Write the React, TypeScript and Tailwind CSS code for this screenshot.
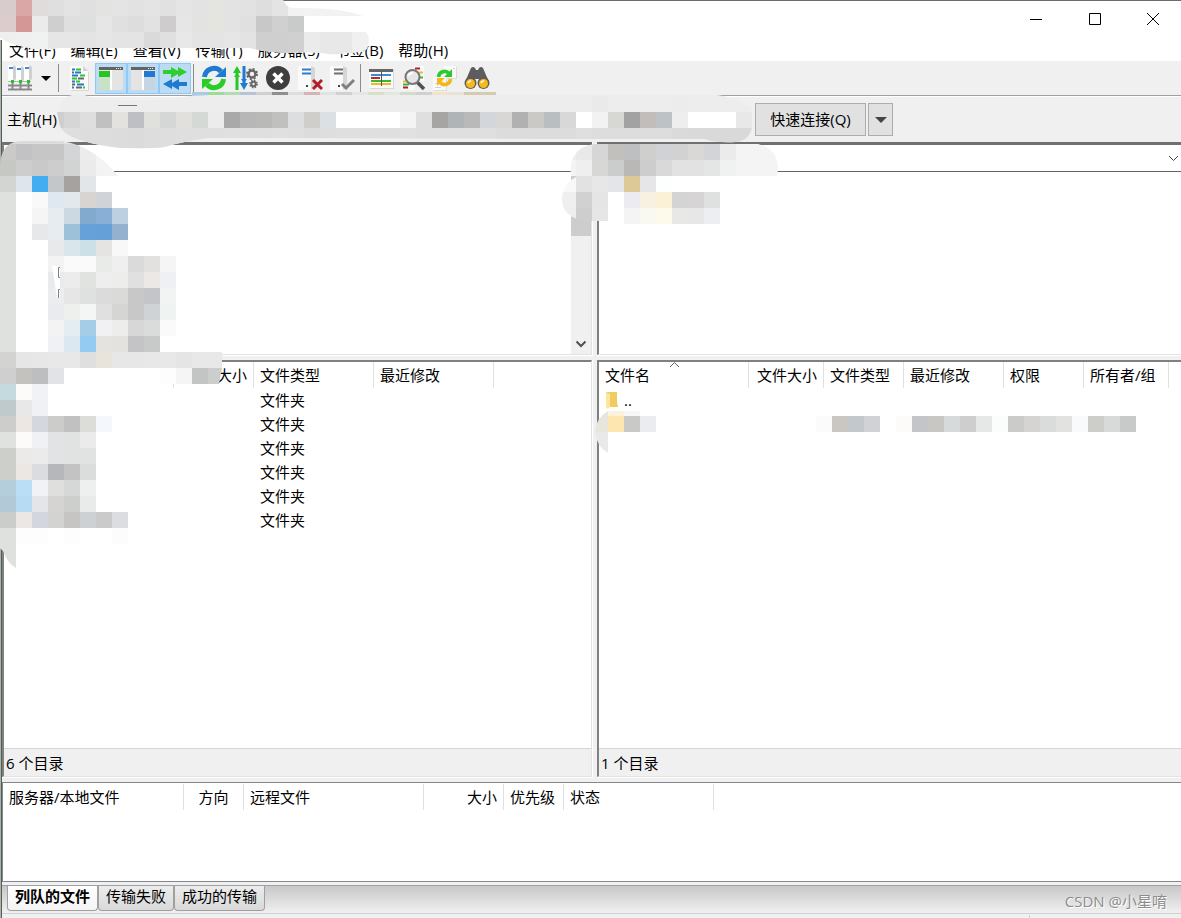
import type { ReactNode } from 'react';

interface Column {
    label: string;
    width: string;
    align?: string;
}

interface MosaicRow {
    x: number;
    y: number;
    h?: number;
    colors: string;
}

const menus = ['文件(F)', '编辑(E)', '查看(V)', '传输(T)', '服务器(S)', '书签(B)', '帮助(H)'];

const localColumns: Column[] = [
    { label: '文件名', width: 'w-[170px]' },
    { label: '文件大小', width: 'w-[80px]', align: 'text-right' },
    { label: '文件类型', width: 'w-[120px]' },
    { label: '最近修改', width: 'w-[120px]' },
];

const remoteColumns: Column[] = [
    { label: '文件名', width: 'w-[150px]' },
    { label: '文件大小', width: 'w-[75px]', align: 'text-right' },
    { label: '文件类型', width: 'w-[80px]' },
    { label: '最近修改', width: 'w-[100px]' },
    { label: '权限', width: 'w-[80px]' },
    { label: '所有者/组', width: 'w-[85px]' },
];

const queueColumns: Column[] = [
    { label: '服务器/本地文件', width: 'w-[181px]' },
    { label: '方向', width: 'w-[60px]', align: 'text-center' },
    { label: '远程文件', width: 'w-[180px]' },
    { label: '大小', width: 'w-[80px]', align: 'text-right' },
    { label: '优先级', width: 'w-[60px]' },
    { label: '状态', width: 'w-[150px]' },
];

const localRows = [1, 2, 3, 4, 5, 6];

// Every colour is one 16px cell, "-" leaves the cell empty
const titleMosaic: MosaicRow[] = [
    { x: 0, y: 0, colors: 'd9cccc dba6a6 e0dcdc dfdfdf e3e3e3 e0e0e0 e3e3e2 e4e4e4 e2e2e2 e4e4e4 e1e1e1 e5e5e5 e3e3e3 e4e4e1 e3e3e3 e2e2e2 dedede e4e4e4' },
    { x: 0, y: 16, colors: 'dccccc d59696 ebebeb cfcfcf dfdfdf dedfdf e6e6e6 e0e0e0 dddddd e2e2e2 cfcccd e6e6e6 e3e4e2 e5e5e0 e3e3e3 e0e0e0 c8c8c8 d0d0d0 c9cbca ffffff ffffff ffffff ffffff ffffff' },
    { x: 0, y: 32, h: 28, colors: 'efefef f0f0f0 f0f2f1 e6e6e6 e6e6e6 e4e4e4 e6e6e6 e4e4e4 e4e4e4 dadada e0e0e0 e8e8e8 e4e4e4 e4e4e4 e6e6e6 e3e3e3 cfcfcf cfcfcf cfd0cf ebebeb e8e8e8 e8e8e8 f0f0f0 f2f2f2' },
];

const connectMosaic: MosaicRow[] = [
    { x: 592, y: 96, colors: 'eaeaea - - - - ececec' },
    { x: 48, y: 112, colors: 'cfcfcf d6d6d6 dedede c0c0c0 e3e2df bdbfc4 e0e0dd d4d7d6 e2e0dd d4d9d6 ececec a9a9a9 b7b7b7 b9b9b7 c0c0be dcdedf d0cecb dbe0e4 ffffff ffffff ffffff ffffff f4f4f4 dfdfdf a6a5a3 afb4b6 b9b9b9 d3d6da d9d7d5 b1b1b1 cac9c6 b9bec1 d8d8d8 ffffff f2f2f2 d7d7d4 a2a2a2 c2bdba bdc2c6 eeeeee ffffff ffffff ffffff e8e8e8' },
    { x: 48, y: 128, h: 20, colors: 'dedede dedede dddddd dddddd dcdcdc dbdbdb dddddd dedede dfdfdf dfdfdf dfdfdf e0e0e0 dfdfdf dfdfdf e0e0e0 dfdfdf dcdcdc dedede dfdfdf dfdfdf dfdfdf dfdfdf e1e1e1 dfdfdf dfdfdf dfdfdf dfdfdf dfdfdf dcdcdc dcdcdc dcdcdc dcdcdc dcdcdc dfdfdf dddddd dddddd dddddd dddddd dddddd dadada d9d9d9 d9d9d9 d9d9d9 d9d9d9' },
];

const localPathMosaic: MosaicRow[] = [
    { x: 0, y: 140, h: 4, colors: 'd9dad8 dcdcdc dcdcdc dcdcdc e4e4e4 ececec' },
    { x: 0, y: 144, colors: 'cacbc8 c2c2c4 c6c6c6 c6c6c6 d4d5d6 ececec f3f3f3 f3f3f3' },
    { x: 0, y: 160, colors: 'c6c8c4 cdcdcd c9c9c9 cdcdcd d2d3d3 ebebeb f3f3f3 f3f3f3' },
];

const localMosaic: MosaicRow[] = [
    { x: 0, y: 176, colors: 'd3d5d3 dee5ed 43adf2 c4c7c9 a5a2a0 e2e6e9' },
    { x: 0, y: 192, h: 160, colors: 'dfe1de' },
    { x: 32, y: 192, colors: 'f9f9f9 dfe8f1 e2e8ec d7d4d2 d0d3d7' },
    { x: 32, y: 208, colors: 'f5f5f5 e7ecf0 ccd8e2 82aacf 8aafd6 bdd0e1' },
    { x: 32, y: 224, colors: 'e7e8ea e7ecf0 9ec1da 66a2d9 66a0d9 94b1cf' },
    { x: 48, y: 240, colors: 'e8e9eb d9e6eb cce0e7 e5e4e2 f8f8f8' },
    { x: 48, y: 256, colors: 'f3f3f3 fafafa fafafa e9ebe9 efefef dadada e3e1df f5f5f5' },
    { x: 48, y: 272, colors: 'e8eaec ececec e1e3e1 eeeeee ededeb e0e0e0 ebe8e5 eff0f4' },
    { x: 48, y: 288, colors: 'ebedef e6e6e6 dfe1e0 dbdbdb dadad9 c8c8c8 c4c5c8 f1f4f3' },
    { x: 48, y: 304, colors: 'e9ebee eef0ee f4f6f5 e0e0e0 d5d5d3 c8c8c8 cfd3d6 eff3f2' },
    { x: 48, y: 320, colors: 'f3f3f3 e4edf1 a5cde8 f1f1f3 ededeb d7d7d7 dadcdb fafafa' },
    { x: 48, y: 336, colors: 'eff1f4 dbe8f2 93cbf3 e5e3df e3e2df c4c4c7 c8cac9' },
    { x: 0, y: 352, colors: 'd3d3d2 e6e6e6 e7e7e7 e8e8e8 e8e8e8 dfdfdf e8e4dc e7e7e7 e7e7e7 e8e8e8 e8e8e8 e5e5e5 e8e8e8' },
    { x: 0, y: 368, colors: 'cfcfcf c4c2bf bdbebf e1e3e6 ffffff - - - - - fdfdfd f5f5f5 c3c5c5' },
    { x: 0, y: 384, colors: 'c5dade fcfbfa f1f2f5' },
    { x: 0, y: 400, colors: 'becacb e8e8e8 f0f1f5' },
    { x: 0, y: 416, colors: 'cdcecb ece7e3 d5d7df cccccb c1c1c1 dcddd8 f4f8fc' },
    { x: 0, y: 432, colors: 'e0e2df fcfbf9 eff1f5 e1e3e4 e1e3e3 ebebeb' },
    { x: 0, y: 448, colors: 'cdcfcb ebeae9 ebebeb e2e3e5 e1e3e2 e1e3e2' },
    { x: 0, y: 464, colors: 'cdcfcb ece7e3 dbdcdf b6b7ba c2c3c2 dbdddc' },
    { x: 0, y: 480, colors: 'b5cedb b9def5 f0f2f5 dfdfdd d6d8d7 edf0ee' },
    { x: 0, y: 496, colors: 'b2cad7 b6dbf2 e3e5e9 d5d4d3 cdcfcd e9ebea' },
    { x: 0, y: 512, colors: 'cacdc9 ece7e4 d3d6de d3d3d2 c6c5c4 cdd1d4 cacaca dbdde0' },
    { x: 16, y: 528, colors: 'fdfdfd fdfdfd - fdfdfd - - fcfcfc' },
];

const remotePathMosaic: MosaicRow[] = [
    { x: 560, y: 144, colors: 'eeeeee e9e9e9 d6d6d6 c1c0bd bdbfc1 cfcfcd d0d2d6 d2d2d2 d9d8d6 d3d4d8 ebebeb f4f4f4 f4f4f4 f4f4f4' },
    { x: 560, y: 160, colors: 'f4f4f4 efefef d7d7d5 cbcdcc bab8b6 cdcdcd d9d9d9 e2e2e2 e2e2e2 e3e6e4 f0f2f1 f4f4f4 f4f4f4 f4f4f4' },
];

const remoteEdgeMosaic: MosaicRow[] = [
    { x: 560, y: 176, colors: 'f8f8f8 e2e2e2 e7e7e7' },
    { x: 560, y: 192, colors: 'efefef d1d1d1 e5e5e5' },
    { x: 560, y: 208, colors: 'eeeeee cecece e6e6e6' },
];

const remoteMosaic: MosaicRow[] = [
    { x: 608, y: 176, colors: 'e4e5e9 dcc997 e6e6e8 fdfefe' },
    { x: 624, y: 192, colors: 'ebebf1 f8f1e1 faf1d6 d4d4d4 d6d4d4 dee1e0' },
    { x: 624, y: 208, colors: 'f4f4f5 f9f9f1 fdfaeb e8e8e7 e7e7e7 edeef1' },
    { x: 608, y: 416, colors: 'fde6b0 c9c9c8 ebecef' },
    { x: 608, y: 411, h: 5, colors: 'fbf2d9 f6f7f6' },
    { x: 816, y: 416, colors: 'fbfbfb cac6c1 c3c8cc d0d2d5 - fcfbfa c4c5c8 c9c7c4 d6dada cfcece e6e8e7 fbfcfc cbcbca d6d4d2 dadbdb e2e2e0 f9fafc cdcdca d7dad8 c8caca' },
];

const toolbarStrip: MosaicRow[] = [
    { x: 192, y: 92, h: 4, colors: 'a9cbe6 9edb9a b4dbb4 b5c4d6 d0d0d0 8f8f8f dedede d4b4b6 e2e2e2 d0d0d0 e6e6e6 dadfcc e0e8e0 d6dacd d0d0d0 f0e4cf e9e2d8 d2cbb0 d4ccb0' },
];

function Mosaic({ rows }: { rows: MosaicRow[] }) {
    return (
        <g shapeRendering="crispEdges">
            {rows.map((row) =>
                row.colors.split(' ').map((color, i) =>
                    color === '-' ? null : (
                        <rect
                            key={`${row.x}-${row.y}-${i}`}
                            x={row.x + i * 16}
                            y={row.y}
                            width={16}
                            height={row.h ?? 16}
                            fill={`#${color}`}
                        />
                    )
                )
            )}
        </g>
    );
}

function Redaction() {
    return (
        <svg className="pointer-events-none absolute left-0 top-0" width="1181" height="918" viewBox="0 0 1181 918" aria-hidden="true">
            <defs>
                <clipPath id="title">
                    <path d="M0 0H283Q286 7 292 8Q340 7 363 16V32H366Q371 38 367 49Q360 53 345 53Q338 55 328 54Q316 51 290 53Q270 53 250 48H60Q40 51 24 47Q8 44 0 37Z" />
                </clipPath>
                <clipPath id="connect">
                    <path d="M57 112H60Q60 102 64 98Q78 91 90 97Q140 104 190 96L210 95H717Q748 100 752 112V128Q748 141 736 142Q715 143 705 139H560Q400 138 208 138Q180 142 165 147Q130 151 100 145Q64 138 60 126Z" />
                </clipPath>
                <clipPath id="localPath">
                    <path d="M0 164Q2 141 22 141H62Q94 146 118 176H0Z" />
                </clipPath>
                <clipPath id="remotePath">
                    <path d="M571 176Q568 148 594 144H758Q782 150 777 176Z" />
                </clipPath>
                <clipPath id="remoteEdge">
                    <path d="M576 176H608V221H587Q562 218 562 199Q562 184 576 177Z" />
                </clipPath>
            </defs>
            <g clipPath="url(#title)">
                <rect width="380" height="60" fill="#f2f2f2" />
                <Mosaic rows={titleMosaic} />
            </g>
            <Mosaic rows={toolbarStrip} />
            <g clipPath="url(#connect)">
                <rect x="50" y="90" width="710" height="60" fill="#ededed" />
                <Mosaic rows={connectMosaic} />
            </g>
            <path d="M118 105.500H137" stroke="#777" />
            <g clipPath="url(#localPath)">
                <Mosaic rows={localPathMosaic} />
            </g>
            <Mosaic rows={localMosaic} />
            <rect x="208" y="352" width="14" height="16" fill="#e8e8e8" />
            <path d="M208 368H222L219 384H208Z" fill="#cccece" />
            <path d="M0 528H16V568Q8 564 3 551L0 548Z" fill="#dfe1de" />
            <path d="M52 265L60 267V298H57Z" fill="#fff" />
            <path d="M60 267.500H58.500V277.500H60M60 289.500H58.500V298" fill="none" stroke="#808080" />
            <g clipPath="url(#remotePath)">
                <Mosaic rows={remotePathMosaic} />
            </g>
            <g clipPath="url(#remoteEdge)">
                <Mosaic rows={remoteEdgeMosaic} />
            </g>
            <Mosaic rows={remoteMosaic} />
            <path d="M608 411Q596 418 595 432H608Z" fill="#e8e5dd" />
            <path d="M595 432H608V453Q597 447 595 432Z" fill="#e9e9e9" />
        </svg>
    );
}

function Icon({ children }: { children: ReactNode }) {
    return (
        <svg className="shrink-0" width="26" height="26" viewBox="0 0 26 26" fill="none" aria-hidden="true">
            {children}
        </svg>
    );
}

function ServerShape({ x, y = 0 }: { x: number; y?: number }) {
    return (
        <g transform={`translate(${x} ${y})`}>
            <path d="M-1 0H4V16H-1Z" fill="#fdfdfd" />
            <path d="M4 0L7 2V14L4 16Z" fill="#d0d0d0" />
            <path d="M0 3H4" stroke="#3c87d8" strokeWidth="2" />
        </g>
    );
}

const SiteManagerIcon = () => (
    <Icon>
        <ServerShape x={2} />
        <ServerShape x={18} />
        <ServerShape x={10} y={1} />
        <path d="M1 20.500H25M1 24.500H25M5.500 16V24M13.500 16V24M21.500 16V24" stroke="#8a8a8a" strokeWidth="2" />
        <path d="M1 16.500H4M7 16.500H12M15 16.500H20M22 16.500H24" stroke="#8ad48a" />
        <path d="M4 15H7V18H4ZM12 15H15V18H12ZM20 15H23V18H20Z" fill="#35b835" />
    </Icon>
);

const LogIcon = () => (
    <Icon>
        <path d="M5 2H18L23 7V26H5Z" fill="#d8d8d8" />
        <path d="M4 1H17L22 6V25H4Z" fill="#fafafa" />
        <path d="M17 1V6H22Z" fill="#d2d2d2" />
        <path d="M6 4.500H9M9 7.500H15M6 10.500H12M6 16.500H9M11 19.500H18M6 22.500H8" stroke="#2479cc" strokeWidth="2" />
        <path d="M10 4.500H15M14 10.500H19M6 13.500H11M10 16.500H14M17 22.500H19" stroke="#28c728" strokeWidth="2" />
        <path d="M6 7.500H8M12 13.500H18M6 19.500H9M10 22.500H16" stroke="#666" strokeWidth="2" />
    </Icon>
);

const WindowIcon = ({ remote = false }: { remote?: boolean }) => (
    <Icon>
        <path d="M1 2H25V25H1Z" fill="#e4e4e4" />
        <path d="M1 2H25V5H1Z" fill="#646464" />
        <path d="M18 3.500H23" stroke="#eee" strokeDasharray="1 1" />
        {remote ? (
            <>
                <path d="M14 6H25V12H14Z" fill="#1f7bd2" />
                <path d="M14 12H25V25H14Z" fill="#c6d5e4" />
                <path d="M13 5V25" stroke="#fff" strokeWidth="2" />
            </>
        ) : (
            <>
                <path d="M1 6H12V12H1Z" fill="#23c723" />
                <path d="M1 12H12V25H1Z" fill="#c8e2c8" />
                <path d="M13 5V25" stroke="#fff" strokeWidth="2" />
            </>
        )}
    </Icon>
);

const QueueIcon = () => (
    <Icon>
        <path d="M1 5H9V2L16 6V2L25 7L16 12V9L9 13V9H1Z" fill="#2dce2d" />
        <path d="M25 17H17V14L10 18V14L1 19L10 24V21L17 25V21H25Z" fill="#1f7bd2" />
    </Icon>
);

const RefreshIcon = () => (
    <Icon>
        <path d="M3.500 12A9.500 9.500 0 0 1 20 6.500" stroke="#1f7bd2" strokeWidth="5" />
        <path d="M25 2V12H14Z" fill="#1f7bd2" />
        <path d="M22.500 14A9.500 9.500 0 0 1 6 19.500" stroke="#26ce26" strokeWidth="5" />
        <path d="M1 24V14H12Z" fill="#26ce26" />
    </Icon>
);

const ProcessIcon = () => (
    <Icon>
        <path d="M4 6V25" stroke="#26c826" strokeWidth="3" />
        <path d="M0 8L4 1L8 8ZM1 12L4 8L7 12Z" fill="#26c826" />
        <path d="M11 1V20" stroke="#1f7bd2" strokeWidth="3" />
        <path d="M7 18L11 25L15 18ZM8 14L11 18L14 14Z" fill="#1f7bd2" />
        <circle cx="19" cy="9" r="3.500" stroke="#666" strokeWidth="2.500" />
        <circle cx="19" cy="9" r="5" stroke="#666" strokeWidth="2" strokeDasharray="2 1.930" />
        <circle cx="20.500" cy="19" r="2.200" stroke="#666" strokeWidth="2" />
        <circle cx="20.500" cy="19" r="3.600" stroke="#666" strokeWidth="1.500" strokeDasharray="1.500 1.330" />
    </Icon>
);

const CancelIcon = () => (
    <Icon>
        <circle cx="13" cy="13" r="12" fill="#3e3e3e" />
        <path d="M8.500 8.500L17.500 17.500M17.500 8.500L8.500 17.500" stroke="#fff" strokeWidth="3.500" />
    </Icon>
);

const DisconnectIcon = () => (
    <Icon>
        <path d="M1 1H14V25H1Z" fill="#fafafa" />
        <path d="M14 1L18 3V22L14 25Z" fill="#d6d6d6" />
        <path d="M5 4.500H14M5 8.500H14" stroke="#2d7ccc" strokeWidth="2" />
        <path d="M9 20H11V22H9Z" fill="#444" />
        <path d="M16 15L25 24M25 15L16 24" stroke="#b31d27" strokeWidth="3" />
    </Icon>
);

const ReconnectIcon = () => (
    <Icon>
        <path d="M1 1H14V25H1Z" fill="#fafafa" />
        <path d="M14 1L18 3V22L14 25Z" fill="#d6d6d6" />
        <path d="M5 4.500H14M5 8.500H14" stroke="#707070" strokeWidth="2" />
        <path d="M9 20H11V22H9Z" fill="#444" />
        <path d="M13 19L17 23L25 15" stroke="#808080" strokeWidth="3" />
    </Icon>
);

const FilterIcon = () => (
    <Icon>
        <path d="M2 4H26V24H2Z" fill="#d8d8d8" />
        <path d="M1 4H25V23H1Z" fill="#fafafa" />
        <path d="M1 4H25V7H1Z" fill="#666" />
        <path d="M3 10H23" stroke="#3b8bd6" strokeWidth="2" />
        <path d="M3 13H12" stroke="#bd2631" strokeWidth="2" />
        <path d="M3 16H23" stroke="#35b835" strokeWidth="2" />
        <path d="M3 19H23" stroke="#f0b91e" strokeWidth="2" />
        <path d="M13.500 6V21" stroke="#555" />
    </Icon>
);

const SearchIcon = () => (
    <Icon>
        <path d="M14 1H24V16H14ZM1 15H15V25H1Z" fill="#fafafa" />
        <path d="M15 3.500H20M3 22.500H8" stroke="#b31d27" strokeWidth="2" />
        <path d="M19 7.500H23M3 16.500H6" stroke="#f0b91e" strokeWidth="2" />
        <path d="M20 12.500H23M3 19.500H9" stroke="#35b835" strokeWidth="2" />
        <path d="M17 17L24 24" stroke="#505050" strokeWidth="3.500" />
        <circle cx="12.500" cy="12" r="7" fill="#e6e6e6" stroke="#777" strokeWidth="2" />
        <path d="M8 11Q9 8 13 8" stroke="#fff" strokeWidth="2" />
    </Icon>
);

const CompareIcon = () => (
    <Icon>
        <path d="M13 2H25V14H13ZM2 12H15V26H2Z" fill="#dcdcdc" />
        <path d="M12 1H24V13H12ZM1 12H14V25H1Z" fill="#fafafa" />
        <path d="M21 3.500H23M3 18.500H6M3 22.500H9" stroke="#d0d0d0" />
        <path d="M6.500 12A6 6 0 0 1 17 8.500" stroke="#2cc92c" strokeWidth="3.500" />
        <path d="M20 4V12H12Z" fill="#2cc92c" />
        <path d="M18.500 14A6 6 0 0 1 8 17.500" stroke="#f2b81c" strokeWidth="3.500" />
        <path d="M5 21V13H13Z" fill="#f2b81c" />
    </Icon>
);

const BinocularsIcon = () => (
    <Icon>
        <path d="M7 3Q9 1 11 3L12 5H14L15 3Q17 1 19 3L25 17H15V14H11V17H1Z" fill="#5d5d5d" />
        <circle cx="6.500" cy="18" r="6" fill="#5d5d5d" />
        <circle cx="19.500" cy="18" r="6" fill="#5d5d5d" />
        <circle cx="6.500" cy="18.500" r="4.500" fill="#fbb917" />
        <circle cx="19.500" cy="18.500" r="4.500" fill="#fbb917" />
        <path d="M4 18Q5 15.500 7 16M17 18Q18 15.500 20 16" stroke="#fff" strokeWidth="1.500" />
    </Icon>
);

function ToolButton({ label, active = false, children }: { label: string; active?: boolean; children: ReactNode }) {
    return (
        <button
            aria-label={label}
            className={`flex h-[31px] w-8 shrink-0 items-center justify-center ${active ? 'border border-[#90c8f6] bg-[#bcdcf4]' : ''}`}
        >
            {children}
        </button>
    );
}

const Separator = () => <div className="ml-[2px] mr-1 h-7 w-px bg-[#8c8c8c]" />;

function HeaderRow({ columns }: { columns: Column[] }) {
    return (
        <thead>
            <tr className="h-[26px]">
                {columns.map((column) => (
                    <th
                        key={column.label}
                        className={`whitespace-nowrap border-r border-[#e0e0e0] px-1.5 py-0 font-normal ${column.width} ${column.align ?? 'text-left'}`}
                    >
                        {column.label}
                    </th>
                ))}
                <th />
            </tr>
        </thead>
    );
}

function PathSelect({ label }: { label: string }) {
    return (
        <div className="relative border-b border-[#646464]">
            <select aria-label={label} className="block h-[26px] w-full appearance-none bg-white px-2" />
            <svg className="pointer-events-none absolute right-[2px] top-[10px]" width="11" height="7" viewBox="0 0 11 7" aria-hidden="true">
                <path d="M1 1L5.500 5.500L10 1" fill="none" stroke="#444" />
            </svg>
        </div>
    );
}

function Panel({ label, status, local = false, children }: { label: string; status: string; local?: boolean; children: ReactNode }) {
    return (
        <section className="flex min-h-0 min-w-0 flex-col gap-1">
            <div className={`border-b border-white ${local ? 'border-r' : ''}`}>
                <div className="border-b border-l-2 border-t-[3px] border-b-[#e3e3e3] border-l-[#808080] border-t-[#707070] bg-white">
                    <PathSelect label={label} />
                    <div className="flex h-[182px] justify-end">
                        {local && (
                            <div className="flex w-[21px] flex-col justify-between border-r border-[#e3e3e3] bg-[#f0f0f0]">
                                <div className="h-16 bg-[#cdcdcd]" />
                                <svg className="mb-1 self-center" width="12" height="12" viewBox="0 0 12 12" aria-hidden="true">
                                    <path d="M1.500 3.500L6 8L10.500 3.500" fill="none" stroke="#505050" strokeWidth="2" />
                                </svg>
                            </div>
                        )}
                    </div>
                </div>
            </div>
            <div className={`flex min-h-0 flex-1 flex-col border-b border-white ${local ? 'border-r' : ''}`}>
                <div
                    className={`relative flex min-h-0 flex-1 flex-col border-b border-l-2 border-t-2 border-b-[#e3e3e3] border-l-[#808080] border-t-[#808080] bg-white ${local ? 'border-r border-r-[#e3e3e3]' : ''}`}
                >
                    <div className="min-h-0 flex-1 overflow-hidden">{children}</div>
                    <p className="h-7 border-t border-[#d5d5d5] bg-[#f0f0f0] pl-[2px] leading-7">{status}</p>
                </div>
            </div>
        </section>
    );
}

export default function App() {
    return (
        <div className="relative flex h-screen min-h-[640px] flex-col overflow-hidden bg-[#f0f0f0] font-['Open_Sans','Noto_Sans_CJK_SC',sans-serif] text-[15px] leading-[22px] text-black">
            <header className="flex h-10 shrink-0 justify-end border-t border-[#6b6b6b] bg-white">
                <button aria-label="最小化" className="flex h-9 w-[58px] items-center justify-center">
                    <svg width="12" height="12" viewBox="0 0 12 12"><path d="M0 6.500H12" stroke="#000" /></svg>
                </button>
                <button aria-label="最大化" className="flex h-9 w-[60px] items-center justify-center">
                    <svg width="12" height="12" viewBox="0 0 12 12"><path d="M0.500 0.500H11.500V11.500H0.500Z" fill="none" stroke="#000" /></svg>
                </button>
                <button aria-label="关闭" className="flex h-9 w-14 items-center justify-center">
                    <svg width="12" height="12" viewBox="0 0 12 12"><path d="M0 0L12 12M12 0L0 12" stroke="#000" /></svg>
                </button>
            </header>

            <div className="flex min-h-0 flex-1 flex-col border-l border-[#a5b8a5]">
                <div className="flex min-h-0 flex-1 flex-col border-l border-[#5a5a5a]">
                    <nav className="flex h-[21px] shrink-0 items-start gap-[15px] bg-white pl-[7px]">
                        {menus.map((menu) => (
                            <button key={menu} className="whitespace-nowrap leading-5">{menu}</button>
                        ))}
                    </nav>

                    <div className="flex h-[35px] shrink-0 items-center border-b border-[#a0a0a0] pl-[2px]">
                        <ToolButton label="站点管理器"><SiteManagerIcon /></ToolButton>
                        <button aria-label="打开站点列表" className="flex h-[31px] w-5 items-center justify-center">
                            <svg width="10" height="5" viewBox="0 0 10 5"><path d="M0 0H10L5 5Z" fill="#000" /></svg>
                        </button>
                        <Separator />
                        <ToolButton label="消息日志"><LogIcon /></ToolButton>
                        <ToolButton label="本地目录树" active><WindowIcon /></ToolButton>
                        <ToolButton label="远程目录树" active><WindowIcon remote /></ToolButton>
                        <ToolButton label="传输队列" active><QueueIcon /></ToolButton>
                        <Separator />
                        <ToolButton label="刷新"><RefreshIcon /></ToolButton>
                        <ToolButton label="处理队列"><ProcessIcon /></ToolButton>
                        <ToolButton label="取消"><CancelIcon /></ToolButton>
                        <ToolButton label="断开连接"><DisconnectIcon /></ToolButton>
                        <ToolButton label="重新连接"><ReconnectIcon /></ToolButton>
                        <Separator />
                        <ToolButton label="过滤"><FilterIcon /></ToolButton>
                        <ToolButton label="搜索"><SearchIcon /></ToolButton>
                        <ToolButton label="比较目录"><CompareIcon /></ToolButton>
                        <ToolButton label="查找文件"><BinocularsIcon /></ToolButton>
                    </div>

                    <form className="flex h-[46px] shrink-0 items-center border-t border-white pl-[5px]">
                        <label htmlFor="host" className="w-[61px] whitespace-nowrap pb-[2px]">主机(H)</label>
                        <input id="host" className="mr-[3px] h-7 w-[684px] bg-[#eeeeee] px-2" />
                        <button type="button" className="h-[33px] w-[111px] border border-[#adadad] bg-[#e1e1e1] pb-[2px]">快速连接(Q)</button>
                        <button type="button" aria-label="历史连接" className="ml-[2px] flex h-[33px] w-[25px] items-center justify-center border border-[#adadad] bg-[#e1e1e1]">
                            <svg width="12" height="6" viewBox="0 0 12 6"><path d="M0 0H12L6 6Z" fill="#444" /></svg>
                        </button>
                    </form>

                    <main className="grid min-h-0 flex-1 grid-cols-[591fr_584fr] gap-1">
                        <Panel label="本地站点" status="6 个目录" local>
                            <table className="w-full table-fixed border-separate border-spacing-0">
                                <HeaderRow columns={localColumns} />
                                <tbody>
                                    {localRows.map((row) => (
                                        <tr key={row} className="h-6">
                                            <td />
                                            <td />
                                            <td className="px-1.5 py-0">文件夹</td>
                                            <td />
                                            <td />
                                        </tr>
                                    ))}
                                </tbody>
                            </table>
                        </Panel>
                        <Panel label="远程站点" status="1 个目录">
                            <svg className="absolute left-[70px] top-0" width="11" height="6" viewBox="0 0 11 6" aria-hidden="true">
                                <path d="M1 5L5.500 0.500L10 5" fill="none" stroke="#666" />
                            </svg>
                            <table className="w-full table-fixed border-separate border-spacing-0">
                                <HeaderRow columns={remoteColumns} />
                                <tbody>
                                    <tr className="h-6">
                                        <td className="px-1.5 py-0">
                                            <div className="flex items-center gap-1.5">
                                                <svg width="13" height="17" viewBox="0 0 13 17" aria-hidden="true">
                                                    <path d="M1 0H12V10L13 15H1Z" fill="#f0cb62" />
                                                    <path d="M1 0L5 2V15L3 17L1 15Z" fill="#fde69c" />
                                                </svg>
                                                ..
                                            </div>
                                        </td>
                                        <td colSpan={6} />
                                    </tr>
                                </tbody>
                            </table>
                        </Panel>
                    </main>

                    <section className="mt-1 h-[100px] shrink-0 overflow-hidden border border-r-0 border-[#828790] bg-white pt-px">
                        <table className="w-full table-fixed border-separate border-spacing-0">
                            <HeaderRow columns={queueColumns} />
                        </table>
                    </section>

                    <footer className="mt-[3px] shrink-0">
                        <div role="tablist" className="flex h-7 border-t border-[#a0a0a0] bg-linear-to-b from-[#c8c8c8] to-[#f0f0f0] pl-[5px]">
                            <button role="tab" aria-selected="true" className="flex h-[25px] items-start rounded-b border border-t-0 border-[#a0a0a0] bg-linear-to-b from-white to-[#f4f4f4] px-[7px] font-bold leading-5">
                                列队的文件
                            </button>
                            <button role="tab" aria-selected="false" className="flex h-[25px] items-start rounded-b border border-t-0 border-[#a0a0a0] bg-linear-to-b from-[#ececec] to-[#d9d9d9] px-[7px] leading-5">
                                传输失败
                            </button>
                            <button role="tab" aria-selected="false" className="flex h-[25px] items-start rounded-b border border-t-0 border-[#a0a0a0] bg-linear-to-b from-[#ececec] to-[#d9d9d9] px-[7px] leading-5">
                                成功的传输
                            </button>
                        </div>
                        <div className="flex h-[5px] justify-end border-t border-[#d0d0d0]">
                            <div className="mt-px w-[152px] border-l border-[#d0d0d0]" />
                        </div>
                    </footer>
                </div>
            </div>

            <span className="absolute bottom-[6px] right-[14px] text-[#8c8c8c] [text-shadow:1px_1px_0_#fff]">CSDN @小星唷</span>
            <Redaction />
        </div>
    );
}
